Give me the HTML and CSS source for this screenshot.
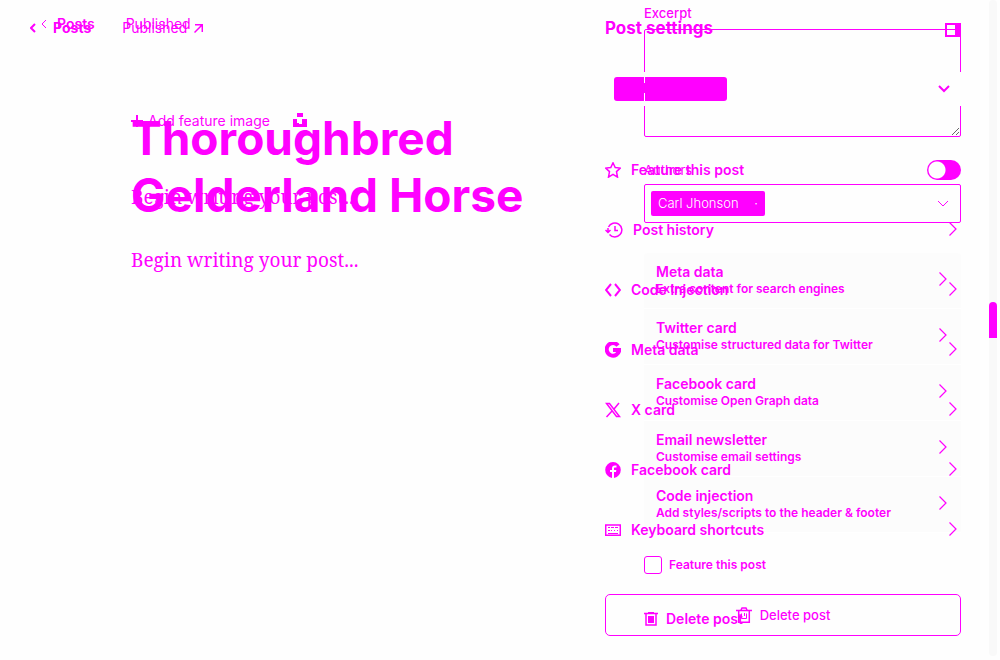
FILE: index.html
```html
<!DOCTYPE html>
<html lang="en">
<head>
<meta charset="utf-8">
<title>Post editor</title>
<meta name="viewport" content="width=device-width, initial-scale=1">
<link rel="stylesheet" href="styles.css">
</head>
<body>
<svg class="defs" aria-hidden="true">
  <symbol id="right" viewBox="0 0 8 14"><path d="M.5 .5 7 7 .5 13.500"/></symbol>
  <symbol id="left" viewBox="0 0 6 10"><path d="M5 1 1 5l4 4"/></symbol>
  <symbol id="down" viewBox="0 0 12 8"><path d="m1 1 5 5 5-5"/></symbol>
</svg>
<div class="stage">
  <div class="layer layer-old">
    <main>
      <nav class="toolbar">
        <a href="#"><svg class="back" viewBox="0 0 6 10"><use href="#left"/></svg>Posts</a>
        <span>Published</span>
      </nav>
      <div class="content">
        <button class="feature-image" type="button"><svg width="12" height="12" viewBox="0 0 12 12"><path d="M6 0v12M0 6h12"/></svg>Add feature image</button>
        <p class="body-text">Begin writing your post...</p>
      </div>
    </main>
    <aside>
      <label class="field-label" for="excerpt">Excerpt</label>
      <textarea id="excerpt"></textarea>
      <div class="field-label authors">Authors</div>
      <div class="author-field">
        <span class="tag">Carl Jhonson <span>·</span></span>
        <svg class="down thin" viewBox="0 0 12 8"><use href="#down"/></svg>
      </div>
      <div class="menu">
        <button type="button"><span><b>Meta data</b><small>Extra content for search engines</small></span><svg class="right" viewBox="0 0 8 14"><use href="#right"/></svg></button>
        <button type="button"><span><b>Twitter card</b><small>Customise structured data for Twitter</small></span><svg class="right" viewBox="0 0 8 14"><use href="#right"/></svg></button>
        <button type="button"><span><b>Facebook card</b><small>Customise Open Graph data</small></span><svg class="right" viewBox="0 0 8 14"><use href="#right"/></svg></button>
        <button type="button"><span><b>Email newsletter</b><small>Customise email settings</small></span><svg class="right" viewBox="0 0 8 14"><use href="#right"/></svg></button>
        <button type="button"><span><b>Code injection</b><small>Add styles/scripts to the header &amp; footer</small></span><svg class="right" viewBox="0 0 8 14"><use href="#right"/></svg></button>
      </div>
      <label class="check"><input type="checkbox">Feature this post</label>
      <button class="delete-old" type="button"><svg width="14" height="14" viewBox="0 0 14 14"><path d="M0 1.500h14M4 .5h6M2 2v11h10V2"/><path class="fill" d="M4 4h6v7H4z"/></svg>Delete post</button>
    </aside>
  </div>

  <div class="layer layer-new">
    <main>
      <nav class="toolbar">
        <a href="#"><svg class="back" viewBox="0 0 6 10"><use href="#left"/></svg>Posts</a>
        <span>Published <svg width="9" height="9" viewBox="0 0 9 9"><path d="M.5 8.500 8 1M1 .7h7.300V8" class="fine"/></svg></span>
      </nav>
      <div class="content">
        <svg class="mark" width="14" height="14" viewBox="0 0 14 14"><path class="fill" d="M4 0h6v4H4zM0 6h4v4h2v1h3V6h5v8H0z"/></svg>
        <h1>Thoroughbred Gelderland Horse</h1>
        <p class="body-text">Begin writing your post...</p>
      </div>
    </main>
    <aside>
      <header><h2>Post settings</h2><button type="button" aria-label="Toggle settings"><svg width="16" height="14" viewBox="0 0 16 14"><path class="fill" fill-rule="evenodd" d="M0 0h16v14H0zM2 2v10h8V2z"/></svg></button></header>
      <div class="status"><span class="status-chip"></span><svg class="down" viewBox="0 0 12 8"><use href="#down"/></svg></div>
      <div class="rows">
        <label class="row"><svg class="icon" viewBox="0 0 16 16"><path class="fine" d="m8 .8 2.200 4.700 5.100.6-3.800 3.500 1 5.500L8 12.300l-4.500 2.800 1-5.500L.7 6.100l5.100-.6z"/></svg>Feature this post<input class="switch" type="checkbox"></label>
        <button class="row" type="button"><svg class="icon wide" viewBox="0 0 18 16"><path class="fine" d="M3.500 5A7 7 0 1 1 4.500 12.500M3 6v4M.5 8 3 10.500 5.500 8M10 4v4.500h3"/></svg>Post history<svg class="right" viewBox="0 0 8 14"><use href="#right"/></svg></button>
        <button class="row" type="button"><svg class="icon" viewBox="0 0 16 16"><path d="M6 2 1 8l5 6M10 2l5 6-5 6"/></svg>Code injection<svg class="right" viewBox="0 0 8 14"><use href="#right"/></svg></button>
        <button class="row" type="button"><svg class="icon heavy" viewBox="0 0 16 16"><path d="M13 3.500A6.300 6.300 0 1 0 14.300 8H8"/></svg>Meta data<svg class="right" viewBox="0 0 8 14"><use href="#right"/></svg></button>
        <button class="row" type="button"><svg class="icon" viewBox="0 0 16 16"><path class="fine" d="M1.500 1.500h3l10 13h-3zM14 1 9 7M7 9l-5.500 6"/></svg>X card<svg class="right" viewBox="0 0 8 14"><use href="#right"/></svg></button>
        <button class="row" type="button"><svg class="icon" viewBox="0 0 16 16"><path class="fill" d="M8 0a8 8 0 0 0-1 15.900V10H5V8h2V6.500C7 4.500 8 3.500 10 3.500h1.500v2H10c-.7 0-1 .4-1 1V8h2.300L11 10H9v5.900A8 8 0 0 0 8 0z"/></svg>Facebook card<svg class="right" viewBox="0 0 8 14"><use href="#right"/></svg></button>
        <button class="row" type="button"><svg class="icon" viewBox="0 0 16 16"><path class="fine" d="M.7 3h14.600v10.300H.7z"/><path class="thin" d="M3 5.500h2M6 5.500h3M10 5.500h3M3 8.500h2M6 8.500h1M9 8.500h1M12 8.500h1M3 11.500h10"/></svg>Keyboard shortcuts<svg class="right" viewBox="0 0 8 14"><use href="#right"/></svg></button>
      </div>
      <button class="delete" type="button"><svg width="16" height="16" viewBox="0 0 16 16"><path class="fine" d="M0 3.500h16M5 3l1-2h4l1 2M2.700 4v11.300h10.600V4"/><path class="thin" d="M5.500 6.500v5h5v-5M8.500 6v3"/></svg>Delete post</button>
    </aside>
  </div>
  <div class="scrollbar"><span></span></div>
</div>
</body>
</html>
```
FILE: styles.css
```css
* { box-sizing: border-box; }
:root { --ink: #ff00ff; }
body { margin: 0; background: #fefefe; color: var(--ink); font: 14px/20px Inter, sans-serif; }
h1, h2, p { margin: 0; }
a { color: inherit; text-decoration: none; }
button { padding: 0; border: 0; background: none; color: inherit; font: inherit; text-align: left; }
svg { flex: none; fill: none; stroke: var(--ink); stroke-width: 2; }
.fill { fill: var(--ink); stroke: none; }
.fine { stroke-width: 1.5; }
.thin { stroke-width: 1; }
.defs { display: none; }
.stage { display: grid; min-height: 100vh; position: relative; }
.layer { grid-area: 1 / 1; display: grid; padding-right: 39px; }
.layer-old { grid-template-columns: 1fr 317px; }
.layer-new { grid-template-columns: 1fr 356px; z-index: 1; }

.toolbar { display: flex; align-items: center; }
.toolbar a, .toolbar span { display: flex; align-items: center; }
.back { width: 6px; height: 10px; }
.layer-old .toolbar { padding: 14px 41px 0; gap: 31px; }
.layer-old .toolbar a { gap: 10px; font-weight: 600; }
.layer-old .back { stroke-width: 1; }
.layer-new .toolbar { padding: 18px 30px 0; gap: 31px; }
.layer-new .toolbar a { gap: 17px; font-weight: 700; }
.layer-new .toolbar span { gap: 7px; }
.content { padding-left: 131px; }
.feature-image { display: flex; align-items: center; gap: 5px; margin-top: 77px; }
.body-text { font: 19px/32px Georgia, "Noto Serif", "Liberation Serif", serif; }
.layer-old .body-text { margin-top: 50px; }
.layer-new .content { position: relative; padding-top: 72px; }
h1 { max-width: 440px; font-size: 46px; line-height: 57px; font-weight: 700; }
.layer-new .body-text { margin-top: 20px; }
.mark { position: absolute; left: 293px; top: 75px; }

.field-label { display: block; font-size: 13px; font-weight: 500; }
.layer-old aside { padding-top: 3px; }
textarea { display: block; width: 100%; height: 108px; margin: 6px 0 0; border: 1px solid var(--ink); border-radius: 2px; background: #fefefe; color: inherit; font: inherit; resize: vertical; }
.authors { margin-top: 23px; font-weight: 400; }
.author-field { display: flex; align-items: center; justify-content: space-between; height: 39px; margin-top: 4px; padding: 0 11px 0 6px; border: 1px solid var(--ink); border-radius: 2px; }
.tag { width: 114px; height: 25px; padding: 0 7px; border-radius: 2px; background: var(--ink); color: #fff; font-size: 13px; font-weight: 300; line-height: 25px; display: flex; justify-content: space-between; }
.down { width: 12px; height: 8px; }
.down.thin { stroke-width: 1; }
.right { width: 8px; height: 14px; stroke-width: 1.2; }
.menu { margin-top: 30px; background: #fcfcfc; border-radius: 4px; }
.menu button { display: flex; justify-content: space-between; width: 100%; height: 56px; padding: 10px 14px 0 12px; border-bottom: 1px solid #fff; }
.menu .right { margin-top: 9px; }
.menu b, .menu small { display: block; line-height: 17px; }
.menu b { font-weight: 600; }
.menu small { font-size: 12px; font-weight: 600; }
.check { display: flex; align-items: center; gap: 7px; margin-top: 22px; font-size: 12px; font-weight: 600; }
.check input { appearance: none; width: 18px; height: 18px; margin: 0; border: 1px solid var(--ink); border-radius: 3px; background: #fff; }
.delete-old { display: flex; align-items: center; gap: 8px; margin-top: 34px; font-weight: 600; }
.delete-old svg { stroke-width: 1.5; }

header { display: flex; align-items: center; justify-content: space-between; height: 20px; margin-top: 18px; }
h2 { font-size: 17px; line-height: 20px; font-weight: 700; }
header button { display: flex; padding-top: 4px; }
.status { display: flex; align-items: center; justify-content: space-between; height: 34px; margin: 34px 0 0; padding: 0 11px 0 9px; background: #fefefe; }
.status-chip { width: 113px; height: 24px; border-radius: 3px; background: linear-gradient(#fff 6px, var(--ink) 6px 16px, #fff 16px) 30px 0 / 1px 100% no-repeat var(--ink); }
.rows { margin-top: 34px; }
.row { display: flex; align-items: center; gap: 10px; width: 100%; height: 60px; font-weight: 600; }
.icon { width: 16px; height: 16px; }
.wide { width: 18px; }
.heavy { stroke-width: 4; }
.row .right { margin: 0 4px 2px auto; }
.switch { appearance: none; width: 34px; height: 20px; margin: 0 0 0 auto; border-radius: 10px; background: radial-gradient(circle at 10px 10px, #fff 8px, var(--ink) 9px); }
.delete { display: flex; align-items: center; justify-content: center; gap: 8px; width: 100%; height: 42px; margin-top: 34px; border: 1px solid var(--ink); border-radius: 5px; font-size: 13px; font-weight: 500; }
.scrollbar { position: absolute; right: 3px; top: 0; bottom: 4px; width: 8px; padding-top: 302px; background: #f9f9f9; border-radius: 4px; }
.scrollbar span { display: block; height: 36px; border-radius: 4px 4px 0 0; background: var(--ink); }
```
